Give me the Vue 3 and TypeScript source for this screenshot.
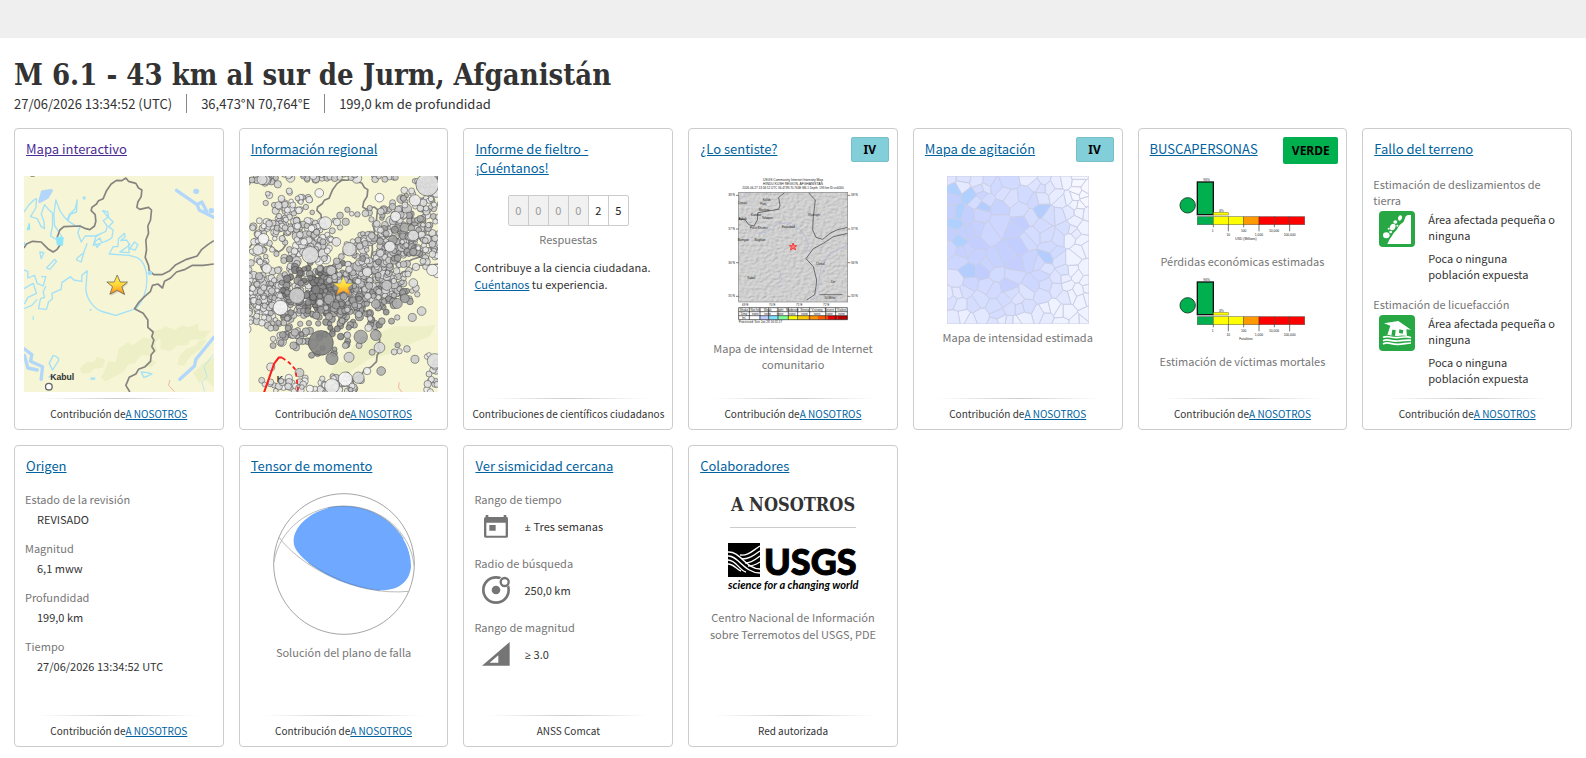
<script setup lang="ts">
interface Card {
  id: string
  title: string
  visited?: boolean
  badge?: string
  badgeTone?: string
  source?: boolean
  note?: string
}

interface Dot { x: number; y: number; r: number; fill: string }
interface Point { x: number; y: number }
interface Cell { points: string; fill: string }

const cards: Card[] = [
  { id: 'map', title: 'Mapa interactivo', visited: true, source: true },
  { id: 'region', title: 'Información regional', source: true },
  { id: 'felt', title: 'Informe de fieltro - ¡Cuéntanos!', note: 'Contribuciones de científicos ciudadanos' },
  { id: 'dyfi', title: '¿Lo sentiste?', badge: 'IV', badgeTone: 'mmi', source: true },
  { id: 'shake', title: 'Mapa de agitación', badge: 'IV', badgeTone: 'mmi', source: true },
  { id: 'pager', title: 'BUSCAPERSONAS', badge: 'VERDE', badgeTone: 'green', source: true },
  { id: 'ground', title: 'Fallo del terreno', source: true },
  { id: 'origin', title: 'Origen', source: true },
  { id: 'tensor', title: 'Tensor de momento', source: true },
  { id: 'nearby', title: 'Ver sismicidad cercana', note: 'ANSS Comcat' },
  { id: 'contrib', title: 'Colaboradores', note: 'Red autorizada' },
]

const origin = [
  { label: 'Estado de la revisión', value: 'REVISADO' },
  { label: 'Magnitud', value: '6,1 mww' },
  { label: 'Profundidad', value: '199,0 km' },
  { label: 'Tiempo', value: '27/06/2026 13:34:52 UTC' },
]

const nearby = [
  { icon: 'calendar', label: 'Rango de tiempo', sign: '±', value: 'Tres semanas' },
  { icon: 'radius', label: 'Radio de búsqueda', sign: '', value: '250,0 km' },
  { icon: 'magnitude', label: 'Rango de magnitud', sign: '≥', value: '3.0' },
]

const hazards = [
  { icon: 'landslide', label: 'Estimación de deslizamientos de tierra' },
  { icon: 'liquefaction', label: 'Estimación de licuefacción' },
]

const losses = [
  { unit: 'USD (Millions)', caption: 'Pérdidas económicas estimadas' },
  { unit: 'Fatalities', caption: 'Estimación de víctimas mortales' },
]

const digits = ['0', '0', '0', '0', '2', '5']

function generator(seed: number): () => number {
  let s = seed
  return () => {
    s = (s * 1664525 + 1013904223) % 4294967296
    return s / 4294967296
  }
}

/* Epicentres, grouped in clusters: x, y, spread x, spread y, count, darkest and lightest grey */
function epicentres(): Dot[] {
  const rnd = generator(41)
  const gauss = () => rnd() + rnd() + rnd() - 1.5
  const clusters = [
    [280, 172, 260, 10, 40, 190, 230],
    [95, 180, 70, 22, 16, 195, 230],
    [170, 255, 55, 45, 40, 205, 240],
    [150, 325, 110, 35, 60, 190, 235],
    [235, 370, 75, 70, 120, 195, 242],
    [85, 370, 40, 60, 24, 205, 245],
    [90, 530, 60, 75, 130, 200, 245],
    [170, 520, 75, 85, 110, 185, 240],
    [330, 570, 130, 60, 120, 135, 180],
    [270, 500, 100, 65, 170, 120, 160],
    [185, 640, 70, 45, 40, 155, 220],
    [280, 660, 60, 60, 12, 125, 160],
    [420, 490, 120, 75, 190, 185, 228],
    [370, 540, 90, 55, 60, 145, 185],
    [450, 400, 100, 95, 160, 185, 232],
    [520, 350, 105, 75, 90, 150, 232],
    [560, 270, 85, 75, 70, 165, 236],
    [600, 200, 60, 60, 45, 195, 240],
    [600, 390, 50, 50, 30, 195, 240],
    [410, 280, 80, 40, 12, 190, 230],
    [500, 530, 45, 30, 10, 140, 175],
    [320, 795, 70, 25, 40, 195, 245],
    [170, 795, 70, 25, 30, 205, 245],
    [610, 740, 25, 70, 20, 200, 240],
    [440, 700, 180, 120, 16, 170, 225],
  ]
  const out: Dot[] = []
  for (const [cx, cy, sx, sy, n, lo, hi] of clusters) {
    for (let i = 0; i < n; i++) {
      const g = Math.round(lo + rnd() * (hi - lo))
      out.push({
        x: Math.round(cx + gauss() * sx),
        y: Math.round(cy + gauss() * sy),
        r: Math.round(7 + rnd() * 4 + (rnd() > 0.93 ? 4 : 0)),
        fill: `rgb(${g},${g},${g})`,
      })
    }
  }
  const large = [
    [590, 195, 34, 222], [553, 242, 17, 235], [495, 290, 15, 240], [447, 234, 13, 248],
    [285, 310, 19, 232], [357, 388, 20, 218], [548, 347, 16, 220], [478, 380, 16, 235],
    [605, 450, 17, 240], [200, 527, 23, 205], [151, 563, 22, 245], [100, 357, 16, 248],
    [84, 390, 15, 230], [240, 405, 25, 222], [272, 668, 37, 130], [305, 715, 18, 150],
    [391, 650, 20, 165], [436, 645, 16, 165], [447, 682, 16, 215], [500, 550, 15, 175],
    [523, 535, 13, 165], [345, 776, 21, 245], [384, 772, 17, 215], [305, 797, 22, 235],
    [452, 752, 13, 180], [612, 722, 22, 222], [573, 573, 13, 210], [545, 592, 12, 200],
    [410, 752, 11, 240], [553, 717, 12, 205], [208, 757, 13, 200], [96, 180, 15, 220],
    [267, 220, 13, 242], [122, 740, 12, 225],
  ]
  for (const [x, y, r, g] of large) out.push({ x, y, r, fill: `rgb(${g},${g},${g})` })
  return out
}

function clip(poly: Point[], a: Point, b: Point): Point[] {
  const mx = (a.x + b.x) / 2
  const my = (a.y + b.y) / 2
  const side = (p: Point) => (p.x - mx) * (b.x - a.x) + (p.y - my) * (b.y - a.y)
  const out: Point[] = []
  poly.forEach((p, i) => {
    const q = poly[(i + 1) % poly.length]
    const sp = side(p)
    const sq = side(q)
    if (sp <= 0) out.push(p)
    if (sp * sq < 0) {
      const t = sp / (sp - sq)
      out.push({ x: p.x + (q.x - p.x) * t, y: p.y + (q.y - p.y) * t })
    }
  })
  return out
}

/* Intensity cells: nearest-station polygons, tinted by their distance from the source */
function intensityCells(): Cell[] {
  const rnd = generator(97)
  const w = 426
  const h = 444
  const sites: Point[] = []
  for (let i = 0; i < 330; i++) {
    sites.push({ x: rnd() * w, y: rnd() * h })
  }
  const kept = sites.filter((s, i) => {
    const inner = s.x > 40 && s.x < 330 && s.y > 60 && s.y < 380
    const gap = inner ? 20 : 15
    return !sites.slice(0, i).some((o) => Math.hypot(o.x - s.x, o.y - s.y) < gap)
  })
  return kept.map((s) => {
    let poly: Point[] = [{ x: 0, y: 0 }, { x: w, y: 0 }, { x: w, y: h }, { x: 0, y: h }]
    for (const o of kept) if (o !== s) poly = clip(poly, s, o)
    const d = Math.hypot((s.x - 150) / 250, (s.y - 205) / 260)
    let t = Math.min(1, Math.max(0, 0.08 + d * d * 0.8 + (rnd() - 0.5) * 0.4))
    if (s.x > 370) t = Math.min(1, t + 0.15)
    let fill = `rgb(${Math.round(193 + t * 46)},${Math.round(205 + t * 37)},255)`
    if (s.x > 385 && s.y < 90) fill = '#f6f7ff'
    if (s.x < 75 && s.y > 35 && s.y < 200) fill = rnd() > 0.45 ? '#b0d0ff' : '#c2cfff'
    else if (rnd() > 0.95 && t < 0.7) fill = '#b3cdff'
    return { points: poly.map((p) => `${p.x.toFixed(1)},${p.y.toFixed(1)}`).join(' '), fill }
  })
}

const dots = epicentres()
const cells = intensityCells()

const border = [
  'M72 384 L80 372 L98 364 L124 366 L134 376 L146 388 L160 396 L172 388 L180 376 L172 352 L180 330 L192 320 L240 318 L258 326 L270 329 L284 318 L288 304 L286 284 L274 272 L276 262 L290 252 L296 242 L310 236 L320 212 L334 192 L350 181 L366 182 L378 174 L386 184 L408 190 L416 204 L426 210 L424 230 L414 246 L411 262 L420 268 L446 262 L455 270 L452 300 L444 318 L446 340 L438 360 L440 390 L436 412 L446 436 L448 452 L462 464 L486 464 L510 452 L528 434 L560 418 L592 408 L606 388 L624 374 L642 362',
  'M642 432 L610 436 L578 436 L556 448 L530 456 L512 474 L494 484 L488 504 L474 492 L458 496 L452 514 L434 530 L416 548 L404 566 L430 580 L444 600 L444 622 L460 636 L456 650 L462 660 L456 680 L464 692 L454 704 L452 724 L436 740 L416 748 L408 762 L388 772 L378 796 L390 816',
]
const hazardText = ['Área afectada pequeña o ninguna', 'Poca o ninguna población expuesta']
const scaleColors = ['#fff', '#bfccff', '#80e0ff', '#7fff93', '#ffff00', '#ffc800', '#ff9100', '#ff5a00', '#e60000', '#b40000']
const scaleNames = ['Not felt', 'Weak', 'Light', 'Moderate', 'Strong', 'V.strong', 'Severe', 'Violent']
const towns = [
  { x: 260, y: 243, name: 'Kulob' }, { x: 188, y: 252, name: 'Denau' }, { x: 250, y: 256, name: 'Panj' },
  { x: 252, y: 273, name: 'Moskva' }, { x: 228, y: 288, name: 'Kunduz' }, { x: 262, y: 297, name: 'Taloqan' },
  { x: 188, y: 300, name: 'Aybak' }, { x: 236, y: 328, name: 'Pul-e Khumri' }, { x: 325, y: 323, name: 'Fayzabad' },
  { x: 402, y: 287, name: 'Khorugh' }, { x: 190, y: 364, name: 'Bamyan' }, { x: 240, y: 364, name: 'Baghlan' },
  { x: 214, y: 477, name: 'Kabul' }, { x: 421, y: 435, name: 'Chitral' }, { x: 459, y: 489, name: 'Dir' },
]
</script>

<template>
  <div class="page">
    <div class="topbar"></div>
    <main class="event">
      <header class="heading">
        <h1>M 6.1 - 43 km al sur de Jurm, Afganistán</h1>
        <ul class="facts">
          <li>27/06/2026 13:34:52 (UTC)</li>
          <li>36,473°N 70,764°E</li>
          <li>199,0 km de profundidad</li>
        </ul>
      </header>

      <div class="grid">
        <article v-for="card in cards" :key="card.id" class="card">
          <div class="card-head">
            <h2><a href="#" :class="{ visited: card.visited }">{{ card.title }}</a></h2>
            <span v-if="card.badge" class="badge" :class="card.badgeTone">{{ card.badge }}</span>
          </div>

          <div class="card-body">
            <svg v-if="card.id === 'map'" class="map" viewBox="72 168 570 648" preserveAspectRatio="xMidYMid slice" role="img" aria-label="Mapa del epicentro">
              <rect x="72" y="168" width="570" height="648" fill="#f6f5d5" />
              <g fill="#edf0c6">
                <path d="M240 745 l20-20 22 2 8-16 26 8-6 24-30 4-10 12-24 2z M310 762 l16-38 22 2 8-40 30-20 10 12 34-26 20 6 6-24 30-8 0 22-20 20 6 28-26 12-20-4-22 26-20 4-12 22-30 14-26 14-14-14z M466 640 l30-22 30 12 20-14 22 6 28-12 0 22 36 0-20 26-40 2-10 16-30 0-20 18-30-6 0-30z M540 706 l20-20 28-10 8-14 26-4-20 30-30 20-20 30-20-4z M580 760 l30-30 32-20 0 90-30-24-14 14z M430 740 l26 0 14-14-20-10z" />
              </g>
              <g fill="none" stroke="#b2d7fb" stroke-width="10" stroke-linejoin="round" stroke-linecap="round">
                <path d="M530 211 L592 254 L598 270 L642 292 M592 254 L606 246 L620 274 M642 652 L588 718 L584 738 L540 778 M72 686 L96 704 L92 724 L128 740 L124 778 M74 706 L84 744 L112 750" />
                <path d="M120 244 L128 216 L154 212 L142 232 Z" fill="#b2d7fb" />
                <path d="M588 214 h2 M634 272 h1" stroke-width="16" />
              </g>
              <g fill="none" stroke="#a2e1f8" stroke-width="4" stroke-linejoin="round">
                <path d="M72 276 L86 256 L102 240 L110 236 L108 264 L92 290 L112 296 L124 320 L134 326 L132 304 L124 282 L134 254 L144 266 L158 280 L158 318 L152 348 L176 362 L188 354 L164 316 L162 282 L168 240 L180 272 L194 292 L202 300 L208 284 L226 266 L232 240 L230 276 L212 282 L204 302 L230 320 L242 316 L234 338 L244 366 L256 348 L284 348 L300 342 L318 334 L322 318 L310 302 L326 290 L324 276 L308 272 L322 288 L340 306 L326 320 L340 330 L336 354 L322 362 L306 368 L300 354 L284 366 L292 382 L302 370 L280 376 L288 350 L304 340" />
                <path d="M72 450 L84 454 L84 474 L104 466 L112 490 L130 498 L138 470 L124 470 M72 506 L100 490 L110 520 L84 532 L74 552 M72 566 L96 556 L112 538 M138 498 L130 516 L134 532 L122 536 L116 566 L140 568 L146 546 L158 536 L156 520 L184 508 L186 488 L212 470 L222 480 L246 484 L246 466 L262 452 L258 508 C262 546 290 572 312 576 L348 586 L408 566 C452 520 452 430 410 412 L388 406 L328 402 L340 380 L354 380 L356 356 L374 340 L376 350 L362 362 L380 360 L390 374 L374 386 L360 396 L388 398 L386 372 M404 366 L414 374 L406 390 L390 386 Z M252 398 L232 414 L230 420 L244 426 Z M120 396 L132 398 L124 416 Z M164 418 L170 424 L150 448 L140 444 Z M262 370 L250 402" />
                <path d="M160 706 Q180 712 176 722 L158 750 L148 730 Z M424 756 L442 758 L456 762 L444 768 L432 772 Z M146 772 L160 764" />
                <path d="M640 704 L612 740 L622 770 L606 786 L614 814" stroke-width="2" />
                <path d="M272 776 h14" stroke-width="7" />
              </g>
              <g fill="none" stroke="#858480" stroke-width="5" stroke-linejoin="round">
                <path v-for="d in border" :key="d" :d="d" />
                <path d="M92 168 h12" />
              </g>
              <path d="M170 352 L190 352 L188 376 L172 374 Z M82 330 l6-20 2 18z M100 600 v-12 M74 378 v-12" fill="#8fe6fa" stroke="#8fe6fa" stroke-width="3" />
              <circle cx="450" cy="459" r="7" fill="#a2dcf8" />
              <circle cx="253" cy="234" r="5" fill="#a2e1f8" />
              <circle cx="272" cy="570" r="3" fill="#a2e1f8" />
              <path d="M510 780 L506 796 L524 815" fill="none" stroke="#f3b9a0" stroke-width="3" />
              <circle cx="147" cy="800" r="10" fill="#fff" stroke="#666" stroke-width="4" />
              <text x="151" y="781" class="city">Kabul</text>
              <path d="M352 465 L361 486 L383 486 L366 500 L374 523 L352 511 L330 523 L338 500 L321 486 L343 486 Z" fill="#777" opacity="0.3" transform="translate(3 4)" />
              <path d="M352 465 L361 486 L383 486 L366 500 L374 523 L352 511 L330 523 L338 500 L321 486 L343 486 Z" fill="url(#gold)" stroke="#555" stroke-width="2" />
              <defs>
                <linearGradient id="gold" x1="0" y1="0" x2="0" y2="1"><stop offset="0" stop-color="#fff45c" /><stop offset="0.5" stop-color="#ffd83a" /><stop offset="1" stop-color="#ff8c1a" /></linearGradient>
              </defs>
            </svg>

            <svg v-else-if="card.id === 'region'" class="map" viewBox="57 168 567 648" preserveAspectRatio="xMidYMid slice" role="img" aria-label="Sismicidad regional">
              <rect x="57" y="168" width="567" height="648" fill="#f6f5d5" />
              <path d="M300 762 l16-38 22 2 38-60 44-14 40-20 30-14 90 0 36-4-20 36-60 22-40 10-20 20-60 14-60 40z" fill="#edf0c6" />
              <g fill="none" stroke="#858480" stroke-width="5" stroke-linejoin="round" transform="translate(-14 0)">
                <path v-for="d in border" :key="d" :d="d" />
              </g>
              <text x="140" y="785" class="city">K</text>
              <g stroke="#444" stroke-width="2">
                <circle v-for="(dot, i) in dots" :key="i" :cx="dot.x" :cy="dot.y" :r="dot.r" :fill="dot.fill" fill-opacity="0.9" stroke-opacity="0.8" />
              </g>
              <path d="M102 816 L132 730 L146 712 L156 712" fill="none" stroke="#fb1d1d" stroke-width="6" />
              <path d="M156 712 L178 728 L196 748 L204 812" fill="none" stroke="#fb1d1d" stroke-width="5" stroke-dasharray="12 9" />
              <path d="M506 786 L504 802 L514 815" fill="none" stroke="#f3b9a0" stroke-width="3" />
              <path d="M339 470 L348 490 L369 490 L353 503 L360 525 L339 513 L318 525 L325 503 L309 490 L330 490 Z" fill="url(#gold2)" stroke="#777" stroke-width="1" />
              <defs>
                <linearGradient id="gold2" x1="0" y1="0" x2="0" y2="1"><stop offset="0" stop-color="#fff45c" /><stop offset="0.5" stop-color="#ffd83a" /><stop offset="1" stop-color="#ff8c1a" /></linearGradient>
              </defs>
            </svg>

            <div v-else-if="card.id === 'felt'" class="felt">
              <div class="counter">
                <span v-for="(digit, i) in digits" :key="i" :class="{ empty: i < 4 }">{{ digit }}</span>
              </div>
              <p class="caption">Respuestas</p>
              <p class="invite">Contribuye a la ciencia ciudadana. <a href="#">Cuéntanos</a> tu experiencia.</p>
            </div>

            <figure v-else-if="card.id === 'dyfi'">
              <svg class="dyfi" viewBox="126 168 426 474" role="img" aria-label="Mapa de intensidad">
                <defs>
                  <filter id="relief" x="0" y="0" width="1" height="1">
                    <feTurbulence type="fractalNoise" baseFrequency="0.09 0.13" numOctaves="3" seed="8" />
                    <feDiffuseLighting surfaceScale="3" diffuseConstant="1.3" lighting-color="#d3d3d3">
                      <feDistantLight azimuth="225" elevation="50" />
                    </feDiffuseLighting>
                  </filter>
                  <clipPath id="frame"><rect x="176" y="217" width="327" height="329" /></clipPath>
                </defs>
                <g class="tiny" text-anchor="middle">
                  <text x="339" y="184">USGS Community Internet Intensity Map</text>
                  <text x="339" y="195">HINDU KUSH REGION, AFGHANISTAN</text>
                  <text x="339" y="208" class="tinier">2026-06-27 13:34:52 UTC 36.473N 70.764E M6.1 Depth: 199 km ID:us6000</text>
                </g>
                <rect x="176" y="217" width="327" height="329" fill="#cbcbcb" />
                <rect x="176" y="217" width="327" height="329" filter="url(#relief)" opacity="0.6" />
                <g clip-path="url(#frame)" fill="none">
                  <path d="M232 340 L262 336 L292 312 L330 308 L362 330 L378 352 L386 376 L376 400 M503 374 L450 400 L424 440 L414 500 L400 540 M178 240 L204 218 M290 500 L304 480 L300 450" stroke="#b0b4d8" stroke-width="2" />
                  <path d="M176 296 L196 300 L206 314 L222 318 L232 300 L234 278 L270 272 L296 268 L300 256 L296 232 L314 218 M386 218 L398 232 L406 240 L400 290 L398 330 L408 352 L428 358 L450 340 L470 330 L503 322 M503 340 L460 350 L430 370 L400 386 L378 416 L400 440 L410 480 L408 500 L404 524 L380 540" stroke="#6a6a6a" stroke-width="3" />
                </g>
                <rect x="176" y="217" width="327" height="329" fill="none" stroke="#888" stroke-width="2" />
                <path d="M339 369 l3 8 8 0 -6 5 3 8 -8 -5 -8 5 3 -8 -6 -5 8 0z" fill="#f77" stroke="#f23c3c" stroke-width="3" />
                <g class="tinier" text-anchor="middle">
                  <text v-for="t in towns" :key="t.name" :x="t.x" :y="t.y">{{ t.name }}</text>
                  <template v-for="(lat, i) in ['38°N', '37°N', '36°N', '35°N']" :key="lat">
                    <text x="155" :y="229 + i * 101">{{ lat }}</text>
                    <text x="523" :y="229 + i * 101">{{ lat }}</text>
                    <path :d="`M168 ${226 + i * 101} h8 M503 ${226 + i * 101} h8`" stroke="#444" stroke-width="2" />
                  </template>
                  <text v-for="(lon, i) in ['69°E', '70°E', '71°E', '72°E']" :key="lon" :x="196 + i * 81" y="558">{{ lon }}</text>
                  <text x="450" y="537">50 Miles</text>
                </g>
                <path d="M418 524 h70" stroke="#444" stroke-width="2" />
                <rect x="176" y="563" width="326" height="36" fill="#fff" />
                <rect v-for="(c, i) in scaleColors" :key="c" :x="208 + i * 29.4" y="587" width="30" height="12" :fill="c" />
                <g class="tinier" text-anchor="middle">
                  <template v-for="(n, i) in scaleNames" :key="n">
                    <text :x="226 + i * 37" y="572">{{ n }}</text>
                    <text :x="226 + i * 37" y="584">none</text>
                  </template>
                  <text x="192" y="572">Shake</text><text x="192" y="584">Dmg</text><text x="192" y="597">Int.</text>
                </g>
                <path d="M176 563 h326 v36 h-326z M176 575 h326 M176 587 h326 M208 563 v36 M240 563 v36 M266 563 v36 M294 563 v36 M325 563 v36 M353 563 v36 M389 563 v36 M437 563 v36 M467 563 v36" fill="none" stroke="#222" stroke-width="2" />
                <text x="176" y="610" class="tinier">Processed: Sun Jun 28 16:31:17</text>
              </svg>
              <figcaption class="caption">Mapa de intensidad de Internet comunitario</figcaption>
            </figure>

            <figure v-else-if="card.id === 'shake'">
              <svg class="shake" viewBox="0 0 426 444" preserveAspectRatio="none" role="img" aria-label="Mapa de agitación">
                <g stroke="#cbcfe6" stroke-width="3" stroke-linejoin="round">
                  <polygon v-for="(cell, i) in cells" :key="i" :points="cell.points" :fill="cell.fill" />
                </g>
              </svg>
              <figcaption class="caption">Mapa de intensidad estimada</figcaption>
            </figure>

            <template v-else-if="card.id === 'pager'">
              <figure v-for="loss in losses" :key="loss.unit" class="loss">
                <svg class="chart" viewBox="126 168 426 216" role="img" :aria-label="loss.caption">
                  <circle cx="176" cy="256" r="23" fill="#00b04f" stroke="#1a4d2e" stroke-width="3" />
                  <rect x="205" y="186" width="48" height="98" fill="#00b04f" stroke="#111" stroke-width="4" />
                  <rect x="254" y="278" width="44" height="7" fill="#ffff00" stroke="#99901a" stroke-width="2" />
                  <g stroke="#333" stroke-opacity="0.6" stroke-width="2">
                    <rect x="205" y="290" width="48" height="24" fill="#00b04f" />
                    <rect x="253" y="290" width="45" height="24" fill="#ffff00" />
                    <rect x="298" y="290" width="46" height="24" fill="#ffff00" />
                    <rect x="344" y="290" width="46" height="24" fill="#ff9900" />
                    <rect x="390" y="290" width="46" height="24" fill="#ff0000" />
                    <rect x="436" y="290" width="46" height="24" fill="#ff0000" />
                    <rect x="482" y="290" width="45" height="24" fill="#ff0000" />
                  </g>
                  <path d="M253 314 v8 M298 314 v20 M344 314 v8 M390 314 v20 M436 314 v8 M482 314 v20" stroke="#333" stroke-width="2" />
                  <g class="tiny" text-anchor="middle">
                    <text x="233" y="183">96%</text><text x="277" y="276">4%</text>
                    <text x="251" y="335">1</text><text x="298" y="348">10</text><text x="344" y="335">100</text>
                    <text x="390" y="348">1,000</text><text x="435" y="337">10,000</text><text x="482" y="348">100,000</text>
                    <text x="351" y="361">{{ loss.unit }}</text>
                  </g>
                </svg>
                <figcaption class="caption">{{ loss.caption }}</figcaption>
              </figure>
            </template>

            <template v-else-if="card.id === 'ground'">
              <section v-for="hazard in hazards" :key="hazard.icon" class="hazard">
                <h3>{{ hazard.label }}</h3>
                <div class="hazard-row">
                  <svg class="hazard-icon" viewBox="0 0 108 108" aria-hidden="true">
                    <rect width="108" height="108" rx="12" fill="#28a745" />
                    <g v-if="hazard.icon === 'landslide'" fill="#fff">
                      <path d="M96 12 V99 H25 L31 86 L38 76 L44 66 L52 58 L62 42 L74 32 L80 16 L86 12 Z" />
                      <ellipse cx="22" cy="73" rx="10" ry="9" />
                      <ellipse cx="41" cy="48" rx="8" ry="10" transform="rotate(30 41 48)" />
                      <ellipse cx="49" cy="33" rx="6" ry="5" />
                      <ellipse cx="63" cy="21" rx="6" ry="8" transform="rotate(25 63 21)" />
                      <circle cx="29" cy="53" r="3" /><circle cx="35" cy="63" r="4" /><circle cx="55" cy="44" r="3" />
                    </g>
                    <g v-else>
                      <path d="M15 25 L58 18 L96 44 L82 43 L84 65 L24 63 L34 32 Z" fill="#fff" />
                      <path d="M40 44 L50 45 L48 63 L37 62 Z M61 43 L73 46 L71 56 L60 54 Z" fill="#28a745" />
                      <path d="M12 67 Q22 61 34 66 T56 68 T78 67 T96 66 M12 77 Q22 71 34 76 T56 78 T78 77 T96 76 M12 87 Q22 81 34 86 T56 88 T78 87 T96 86" fill="none" stroke="#28a745" stroke-width="9" />
                      <path d="M12 67 Q22 63 34 66 T56 68 T78 66 T96 68 M12 77 Q22 73 34 76 T56 78 T78 76 T96 76 M12 87 Q22 82 34 85 T56 88 T78 86 T96 84" fill="none" stroke="#fff" stroke-width="5" />
                    </g>
                  </svg>
                  <div class="hazard-text">
                    <p v-for="line in hazardText" :key="line">{{ line }}</p>
                  </div>
                </div>
              </section>
            </template>

            <dl v-else-if="card.id === 'origin'" class="origin">
              <template v-for="row in origin" :key="row.label">
                <dt>{{ row.label }}</dt>
                <dd>{{ row.value }}</dd>
              </template>
            </dl>

            <figure v-else-if="card.id === 'tensor'">
              <svg class="tensor" viewBox="819 155 426 435" role="img" aria-label="Mecanismo focal">
                <circle cx="1032" cy="368" r="211" fill="#fff" stroke="#777" stroke-width="2" />
                <path d="M822 362 C838 262 930 194 1032 194 C1140 194 1232 270 1242 372 M837 288 C900 372 1060 466 1228 450" fill="none" stroke="#bbb" stroke-width="3" />
                <path d="M1032 195 C1150 196 1234 286 1233 376 C1228 424 1194 447 1140 447 C1030 436 960 392 920 360 C890 332 880 318 881 296 C884 246 950 194 1032 195 Z" fill="#6ea8ff" />
                <path d="M985 199 C1070 184 1160 212 1210 292 M925 364 C985 404 1060 440 1140 447" fill="none" stroke="#5b83b8" stroke-width="2" />
              </svg>
              <figcaption class="caption">Solución del plano de falla</figcaption>
            </figure>

            <dl v-else-if="card.id === 'nearby'" class="nearby">
              <template v-for="row in nearby" :key="row.label">
                <dt>{{ row.label }}</dt>
                <dd>
                  <svg v-if="row.icon === 'calendar'" viewBox="69 208 108 108" aria-hidden="true">
                    <path fill="#757575" fill-rule="evenodd" d="M92 229 h8 v6 h46 v-6 h8 v6 h1 q4 0 4 5 v53 q0 4 -4 4 h-63 q-5 0 -5 -4 v-53 q0 -5 5 -5z M94 252 v39 h58 v-39z M103 259 h19 v17 h-19z" />
                  </svg>
                  <svg v-else-if="row.icon === 'radius'" viewBox="69 400 108 108" aria-hidden="true">
                    <circle cx="123" cy="454" r="38" fill="none" stroke="#757575" stroke-width="8" />
                    <circle cx="123" cy="454" r="13" fill="#757575" />
                    <circle cx="148" cy="430" r="17" fill="#fff" />
                    <circle cx="149" cy="430" r="12" fill="#fff" stroke="#757575" stroke-width="7" />
                  </svg>
                  <svg v-else viewBox="69 592 108 108" aria-hidden="true">
                    <path fill="#757575" fill-rule="evenodd" d="M164 610 V681 H81 Z M130 650 L104 672 H130 Z" />
                  </svg>
                  <span><span v-if="row.sign" class="sign">{{ row.sign }}&nbsp;</span>{{ row.value }}</span>
                </dd>
              </template>
            </dl>

            <div v-else class="contrib">
              <h3>A NOSOTROS</h3>
              <svg class="logo" viewBox="0 0 134 50" role="img" aria-label="USGS">
                <rect x="2" y="0" width="32" height="34" fill="#000" />
                <g fill="none" stroke="#fff" stroke-width="1.4" transform="translate(2 0)">
                  <path d="M0 9 C12 8 18 26 32 26 M0 13 C10 12 16 30 32 30 M0 17 C8 17 12 28 18 29 M0 21 C6 21 9 27 13 28" />
                  <path d="M12 12 C20 13 24 8 32 3 M14 16 C22 16 26 12 32 8 M17 20 C24 20 28 16 32 13 M20 23 C26 23 29 21 32 19" />
                </g>
                <text x="38" y="32" class="usgs">USGS</text>
                <text x="2" y="46" class="tagline">science for a changing world</text>
              </svg>
              <p class="caption">Centro Nacional de Información sobre Terremotos del USGS, PDE</p>
            </div>
          </div>

          <footer class="card-foot">
            <template v-if="card.source">Contribución de<a href="#">A NOSOTROS</a></template>
            <template v-else>{{ card.note }}</template>
          </footer>
        </article>
      </div>
    </main>
  </div>
</template>

<style>
body {
  background: #fff;
}
</style>

<style scoped>
.page {
  font-family: "Noto Sans CJK SC", "Open Sans", sans-serif;
  font-size: 11px;
  line-height: 16px;
  color: #333;
}
.page h1, .page h2, .page h3, .page p, .page dl, .page dd, .page figure, .page ul {
  margin: 0;
  padding: 0;
  font-weight: 400;
}
a {
  color: #00629f;
  text-decoration: underline;
}
a.visited {
  color: #4c2c92;
}
svg {
  display: block;
}
.topbar {
  height: 38px;
  background: #efefef;
}
.event {
  padding: 18px 14px 11px;
}
.page h1 {
  font-family: "DejaVu Serif Condensed", "DejaVu Serif", serif;
  font-size: 29px;
  line-height: 38px;
  font-weight: 700;
}
.page .facts {
  display: flex;
  flex-wrap: wrap;
  margin: 0 0 15px;
  list-style: none;
  font-size: 13px;
  line-height: 19px;
}
.facts li + li {
  margin-left: 14px;
  padding-left: 14px;
  border-left: 1px solid #888;
}
.grid {
  display: grid;
  grid-template-columns: repeat(auto-fill, minmax(200px, 1fr));
  grid-auto-rows: 302px;
  gap: 15px;
}
.card {
  display: flex;
  flex-direction: column;
  min-width: 0;
  box-sizing: border-box;
  border: 1px solid #ccc;
  border-radius: 4px;
}
.card-head {
  display: flex;
  align-items: flex-start;
  justify-content: space-between;
  padding: 8px 8px 0 11px;
}
.page h2 {
  padding: 2px 0 18px;
  font-size: 13px;
  line-height: 19px;
}
.badge {
  box-sizing: border-box;
  border-radius: 2px;
  font-family: "Noto Sans", "Open Sans", sans-serif;
  font-size: 12px;
  font-weight: 700;
  color: #000;
  text-align: center;
}
.badge.mmi {
  width: 38px;
  height: 25px;
  border: 1px solid #77bfc9;
  background: #82cfda;
  line-height: 23px;
}
.badge.green {
  width: 55px;
  height: 27px;
  background: #00b04f;
  line-height: 28px;
}
.card-body {
  flex: 1;
  padding: 0 9px;
}
.map {
  width: 100%;
  height: 216px;
}
.city {
  font: 700 26px "Liberation Sans", sans-serif;
  fill: #333;
}
.caption {
  color: #767676;
  text-align: center;
}
.counter {
  display: flex;
  width: max-content;
  margin: 0 auto;
  border: 1px solid #ccc;
  border-radius: 2px;
}
.counter span {
  width: 19px;
  line-height: 29px;
  text-align: center;
  color: #222;
}
.counter span + span {
  border-left: 1px solid #ccc;
}
.counter .empty {
  background: #f1f1f1;
  color: #999;
}
.felt .caption {
  margin-top: 5px;
}
.page .invite {
  margin: 12px 1px 0;
  line-height: 17px;
}
.dyfi {
  width: 142px;
  height: 158px;
  margin: 0 auto 6px;
}
.shake {
  width: 142px;
  height: 148px;
  margin: 0 auto 5px;
}
.tensor {
  width: 142px;
  height: 145px;
  margin: 0 auto 6px;
}
.chart {
  width: 142px;
  height: 72px;
  margin: 0 auto 5px;
}
.page .loss {
  margin-bottom: 7px;
}
.tiny {
  font: 10px "Liberation Sans", sans-serif;
  fill: #222;
}
.tinier {
  font: 9px "Liberation Sans", sans-serif;
  fill: #222;
}
.hazard + .hazard {
  margin-top: 14px;
}
.page .hazard h3 {
  padding-left: 1px;
  font-size: 11px;
  color: #767676;
}
.hazard-row {
  display: flex;
  gap: 13px;
  margin-top: 3px;
  padding: 0 3px 0 7px;
}
.hazard-icon {
  flex: none;
  width: 36px;
  height: 36px;
}
.hazard-text p + p {
  margin-top: 7px;
}
dt {
  color: #767676;
}
.page .origin, .page .nearby {
  margin-top: -2px;
}
.origin dt, .nearby dt {
  padding-left: 1px;
}
.page .origin dd {
  margin: 4px 0 13px;
  padding-left: 13px;
}
.page .nearby dd {
  display: flex;
  align-items: center;
  gap: 10px;
  margin: 1px 0 11px;
  padding-left: 5px;
}
.nearby svg {
  width: 36px;
  height: 36px;
}
.sign {
  font-family: "Open Sans", sans-serif;
}
.contrib {
  display: flex;
  flex-direction: column;
  align-items: center;
}
.page .contrib h3 {
  padding: 0 1px 10px;
  border-bottom: 1px solid #ccc;
  font-family: "DejaVu Serif Condensed", "DejaVu Serif", serif;
  font-size: 18px;
  line-height: 24px;
  font-weight: 700;
}
.logo {
  width: 134px;
  height: 50px;
  margin: 15px 0 16px;
}
.usgs {
  font: 900 36px Lato, "Liberation Sans", sans-serif;
  stroke: #000;
  stroke-width: 1;
}
.tagline {
  font: italic 700 11px Lato, "Liberation Sans", sans-serif;
}
.contrib .caption {
  line-height: 17px;
}
.card-foot {
  height: 16px;
  margin: 0 8px;
  padding: 8px 0 7px;
  background: linear-gradient(90deg, transparent 8%, #ccc 50%, transparent 92%) top / 100% 1px no-repeat;
  font-size: 10px;
  text-align: center;
  white-space: nowrap;
}
</style>
